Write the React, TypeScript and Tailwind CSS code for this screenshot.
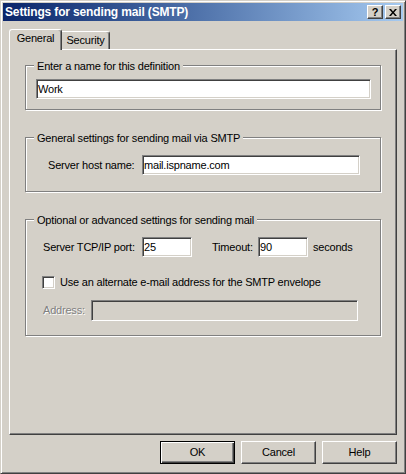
import type { ReactNode } from 'react';

const raised = 'border border-t-white border-l-white border-r-[#404040] border-b-[#404040] shadow-[inset_-1px_-1px_0_#808080]';
const sunken = 'border border-t-[#808080] border-l-[#808080] border-r-white border-b-white shadow-[inset_1px_1px_0_#404040,inset_-1px_-1px_0_#d4d0c8]';

function Group({ title, className, children }: { title: string; className: string; children?: ReactNode }) {
    return (
        <div className={`relative border border-[#808080] shadow-[inset_1px_1px_0_#fff,1px_1px_0_#fff] ${className}`}>
            <span className="absolute left-[8px] top-[-6px] bg-[#d4d0c8] px-[3px] leading-[13px] whitespace-nowrap">{title}</span>
            {children}
        </div>
    );
}

function TextBox({ value, className, disabled }: { value?: string; className: string; disabled?: boolean }) {
    return (
        <div className={`${sunken} ${disabled ? 'bg-[#d4d0c8]' : 'bg-white'} flex items-center pl-[1px] whitespace-nowrap ${className}`}>
            {value}
        </div>
    );
}

function Button({ label, isDefault }: { label: string; isDefault?: boolean }) {
    const frame = isDefault
        ? 'border border-black shadow-[inset_1px_1px_0_#fff,inset_-1px_-1px_0_#404040,inset_-2px_-2px_0_#808080]'
        : raised;
    return (
        <button className={`w-[75px] h-[23px] flex items-center justify-center bg-[#d4d0c8] ${frame}`}>
            {label}
        </button>
    );
}

export default function App() {
    return (
        <div className="w-[406px] h-[474px] bg-[#d4d0c8] border border-t-[#d4d0c8] border-l-[#d4d0c8] border-r-[#404040] border-b-[#404040] shadow-[inset_1px_1px_0_#fff,inset_-1px_-1px_0_#808080] p-[2px] font-['Liberation_Sans',Arial,sans-serif] text-[11px] leading-[13px] tracking-[-0.2px] text-black flex flex-col">
            {/* title bar */}
            <div className="h-[18px] flex items-center bg-linear-to-r from-[#0a246a] to-[#a6caf0] pl-[2px] pr-[2px]">
                <span className="text-white font-bold text-[12px] tracking-[-0.15px]">Settings for sending mail (SMTP)</span>
                <div className="ml-auto flex gap-[2px]">
                    <div className={`${raised} bg-[#d4d0c8] w-[16px] h-[14px] flex items-center justify-center font-bold text-[11px] leading-none tracking-normal`}>?</div>
                    <div className={`${raised} bg-[#d4d0c8] w-[16px] h-[14px] flex items-center justify-center`}>
                        <svg width="8" height="7" viewBox="0 0 8 7">
                            <path d="M0 0h2l2 2.5L6 0h2L5 3.5 8 7H6L4 4.5 2 7H0l3-3.5z" fill="#000" />
                        </svg>
                    </div>
                </div>
            </div>

            <div className="px-[6px] flex flex-col">
                {/* tabs */}
                <div className="mt-[8px] flex items-end">
                    <div className="relative z-10 -mb-px w-[53px] h-[21px] bg-[#d4d0c8] border-t border-l border-r border-t-white border-l-white border-r-[#404040] shadow-[inset_-1px_0_0_#808080] rounded-t-[3px] flex justify-center pt-[2px]">
                        General
                    </div>
                    <div className="w-[48px] h-[18px] bg-[#d4d0c8] border-t border-r border-t-white border-r-[#404040] shadow-[inset_-1px_0_0_#808080] rounded-tr-[3px] flex justify-center pt-[2px]">
                        Security
                    </div>
                </div>

                {/* tab panel */}
                <div className={`${raised} h-[386px] px-[15px] flex flex-col`}>
                    <Group title="Enter a name for this definition" className="mt-[15px] h-[45px] pt-[13px] pl-[10px]">
                        <TextBox value="Work" className="w-[335px] h-[20px]" />
                    </Group>

                    <Group title="General settings for sending mail via SMTP" className="mt-[27px] h-[55px] pt-[17px]">
                        <div className="flex items-center">
                            <span className="w-[116px] pl-[22px]">Server host name:</span>
                            <TextBox value="mail.ispname.com" className="w-[218px] h-[20px]" />
                        </div>
                    </Group>

                    <Group title="Optional or advanced settings for sending mail" className="mt-[27px] h-[117px] pt-[17px] flex flex-col">
                        <div className="flex items-center">
                            <span className="w-[116px] pl-[17px] whitespace-nowrap">Server TCP/IP port:</span>
                            <TextBox value="25" className="w-[50px] h-[20px]" />
                            <span className="ml-[20px] w-[46px]">Timeout:</span>
                            <TextBox value="90" className="w-[50px] h-[20px]" />
                            <span className="ml-[5px]">seconds</span>
                        </div>
                        <div className="mt-[19px] flex items-center pl-[16px]">
                            <div className={`${sunken} bg-white w-[13px] h-[13px]`} />
                            <span className="ml-[5px] whitespace-nowrap">Use an alternate e-mail address for the SMTP envelope</span>
                        </div>
                        <div className="mt-[11px] flex items-center pl-[17px]">
                            <span className="w-[48px] text-[#808080] [text-shadow:1px_1px_0_#fff]">Address:</span>
                            <TextBox className="w-[267px] h-[21px]" disabled />
                        </div>
                    </Group>
                </div>

                {/* buttons */}
                <div className="mt-[6px] flex justify-end gap-[6px]">
                    <Button label="OK" isDefault />
                    <Button label="Cancel" />
                    <Button label="Help" />
                </div>
            </div>
        </div>
    );
}
